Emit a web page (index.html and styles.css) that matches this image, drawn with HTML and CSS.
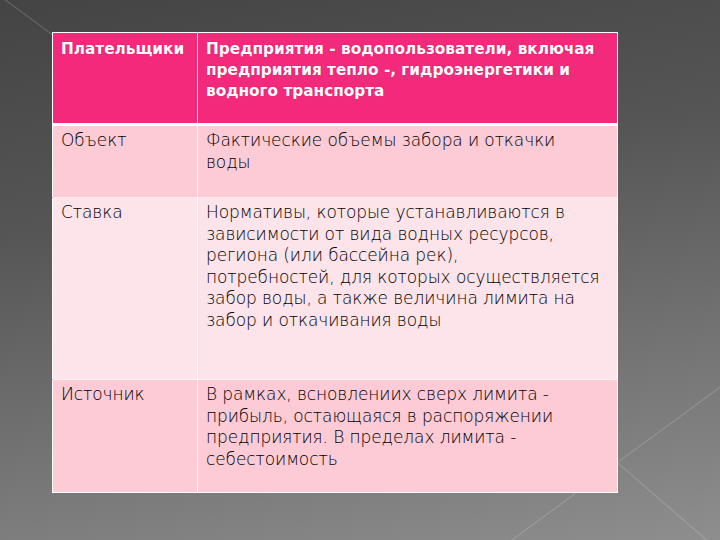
FILE: index.html
```html
<!DOCTYPE html>
<html lang="ru">
<head>
<meta charset="utf-8">
<title>Плательщики</title>
<link rel="stylesheet" href="styles.css">
</head>
<body>
<div class="slide">
  <svg class="deco" width="720" height="540" viewBox="0 0 720 540" aria-hidden="true">
    <line x1="0" y1="-4" x2="160" y2="114" />
    <line x1="460" y1="578" x2="760" y2="358" />
    <line x1="520" y1="378" x2="718" y2="550" />
  </svg>
  <table class="grid">
    <tr class="row-head">
      <td class="c1">Плательщики</td>
      <td class="c2">Предприятия - водопользователи, включая<br>предприятия тепло -, гидроэнергетики и<br>водного транспорта</td>
    </tr>
    <tr class="row-a r1">
      <td class="c1">Объект</td>
      <td class="c2">Фактические объемы забора и откачки<br>воды</td>
    </tr>
    <tr class="row-b r2">
      <td class="c1">Ставка</td>
      <td class="c2">Нормативы, которые устанавливаются в<br>зависимости от вида водных ресурсов,<br>региона (или бассейна рек),<br>потребностей, для которых осуществляется<br>забор воды, а также величина лимита на<br>забор и откачивания воды</td>
    </tr>
    <tr class="row-a r3">
      <td class="c1">Источник</td>
      <td class="c2">В рамках, всновлениих сверх лимита -<br>прибыль, остающаяся в распоряжении<br>предприятия. В пределах лимита -<br>себестоимость</td>
    </tr>
  </table>
</div>
</body>
</html>
```

FILE: styles.css
```css
html, body {
  margin: 0;
  padding: 0;
}
.slide {
  position: relative;
  width: 720px;
  height: 540px;
  overflow: hidden;
  background: linear-gradient(170deg, #444444 0%, #555555 35%, #747474 70%, #8e8e8e 100%);
  padding: 32px 0 0 52px;
  box-sizing: border-box;
}
.deco {
  position: absolute;
  left: 0;
  top: 0;
}
.deco line {
  stroke: rgba(255, 255, 255, 0.16);
  stroke-width: 1.2;
}
.grid {
  position: relative;
  width: 566px;
  height: 461px;
  border-collapse: collapse;
  table-layout: fixed;
  font-family: "DejaVu Sans", sans-serif;
  font-weight: 200;
  font-size: 17px;
  line-height: 21.6px;
  letter-spacing: -0.1px;
  border: 1.5px solid #ffffff;
}
.grid td {
  vertical-align: top;
  padding: 4px 2px 0 8px;
  box-sizing: border-box;
  white-space: nowrap;
}
.c1 {
  width: 145px;
  border-right: 1.5px solid rgba(255, 255, 255, 0.8);
}
.row-head {
  height: 92px;
  background: #f3297b;
  color: #ffffff;
  font-weight: bold;
  font-size: 15.3px;
  letter-spacing: 0;
  line-height: 21px;
}
.row-head td {
  padding-top: 6px;
  border-bottom: 3px solid #ffffff;
  text-shadow: 0 0 1px rgba(120, 0, 40, 0.35);
}
.row-a {
  background: #fccbd6;
  color: #000000;
}
.row-b {
  background: #fde3ea;
  color: #000000;
}
.r1 { height: 73px; }
.r2 { height: 182px; }
.r3 { height: 113px; }
.r1 td, .r2 td {
  border-bottom: 1px solid rgba(255, 255, 255, 0.6);
}
```
